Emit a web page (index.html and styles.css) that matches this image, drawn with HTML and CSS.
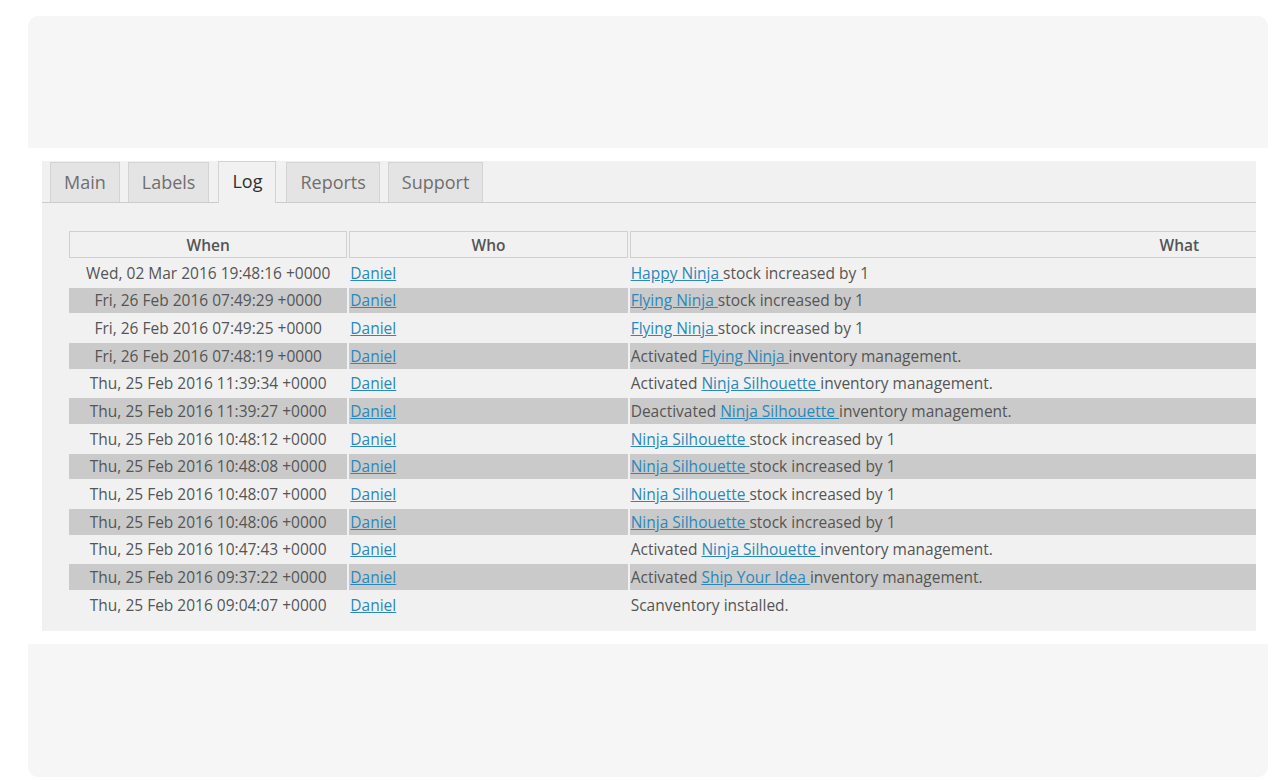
FILE: index.html
```html
<!DOCTYPE html>
<html>
<head>
<meta charset="utf-8">
<link rel="stylesheet" href="styles.css">
</head>
<body>
<div class="block block-top"></div>
<div class="panel">
  <div class="tabs">
    <div class="tab">Main</div>
    <div class="tab">Labels</div>
    <div class="tab active">Log</div>
    <div class="tab">Reports</div>
    <div class="tab">Support</div>
  </div>
  <table class="log">
    <colgroup><col class="c-when"><col class="c-who"><col class="c-what"></colgroup>
    <thead>
      <tr><th>When</th><th>Who</th><th>What</th></tr>
    </thead>
    <tbody>
      <tr><td class="when">Wed, 02 Mar 2016 19:48:16 +0000</td><td><a href="#">Daniel</a></td><td><a href="#">Happy Ninja </a>stock increased by 1</td></tr>
      <tr class="alt"><td class="when">Fri, 26 Feb 2016 07:49:29 +0000</td><td><a href="#">Daniel</a></td><td><a href="#">Flying Ninja </a>stock increased by 1</td></tr>
      <tr><td class="when">Fri, 26 Feb 2016 07:49:25 +0000</td><td><a href="#">Daniel</a></td><td><a href="#">Flying Ninja </a>stock increased by 1</td></tr>
      <tr class="alt"><td class="when">Fri, 26 Feb 2016 07:48:19 +0000</td><td><a href="#">Daniel</a></td><td>Activated <a href="#">Flying Ninja </a>inventory management.</td></tr>
      <tr><td class="when">Thu, 25 Feb 2016 11:39:34 +0000</td><td><a href="#">Daniel</a></td><td>Activated <a href="#">Ninja Silhouette </a>inventory management.</td></tr>
      <tr class="alt"><td class="when">Thu, 25 Feb 2016 11:39:27 +0000</td><td><a href="#">Daniel</a></td><td>Deactivated <a href="#">Ninja Silhouette </a>inventory management.</td></tr>
      <tr><td class="when">Thu, 25 Feb 2016 10:48:12 +0000</td><td><a href="#">Daniel</a></td><td><a href="#">Ninja Silhouette </a>stock increased by 1</td></tr>
      <tr class="alt"><td class="when">Thu, 25 Feb 2016 10:48:08 +0000</td><td><a href="#">Daniel</a></td><td><a href="#">Ninja Silhouette </a>stock increased by 1</td></tr>
      <tr><td class="when">Thu, 25 Feb 2016 10:48:07 +0000</td><td><a href="#">Daniel</a></td><td><a href="#">Ninja Silhouette </a>stock increased by 1</td></tr>
      <tr class="alt"><td class="when">Thu, 25 Feb 2016 10:48:06 +0000</td><td><a href="#">Daniel</a></td><td><a href="#">Ninja Silhouette </a>stock increased by 1</td></tr>
      <tr><td class="when">Thu, 25 Feb 2016 10:47:43 +0000</td><td><a href="#">Daniel</a></td><td>Activated <a href="#">Ninja Silhouette </a>inventory management.</td></tr>
      <tr class="alt"><td class="when">Thu, 25 Feb 2016 09:37:22 +0000</td><td><a href="#">Daniel</a></td><td>Activated <a href="#">Ship Your Idea </a>inventory management.</td></tr>
      <tr><td class="when">Thu, 25 Feb 2016 09:04:07 +0000</td><td><a href="#">Daniel</a></td><td>Scanventory installed.</td></tr>
    </tbody>
  </table>
</div>
<div class="block block-bottom"></div>
</body>
</html>
```

FILE: styles.css
```css
html, body {
  margin: 0;
  padding: 0;
  background: #ffffff;
  font-family: "Open Sans", "DejaVu Sans", sans-serif;
}

.block {
  background: #f6f6f6;
  width: 1240px;
  margin-left: 28px;
}

.block-top {
  margin-top: 16px;
  height: 132px;
  border-radius: 10px 10px 0 0;
}

.block-bottom {
  margin-top: 13px;
  height: 133px;
  border-radius: 0 0 10px 10px;
}

.panel {
  margin-top: 13px;
  margin-left: 42px;
  width: 1214px;
  height: 470px;
  background: #f1f1f1;
  overflow: hidden;
}

.tabs {
  display: flex;
  align-items: flex-end;
  gap: 8px;
  padding-left: 8px;
  border-bottom: 1px solid #cccccc;
  height: 41px;
}

.tab {
  height: 40px;
  box-sizing: border-box;
  padding: 0 13px;
  border: 1px solid #d3d3d3;
  border-bottom: none;
  background: #e4e4e4;
  color: #6f6f6f;
  font-size: 18px;
  line-height: 38px;
}

.tab.active {
  background: #f1f1f1;
  color: #2f2f2f;
  height: 42px;
  line-height: 39px;
  margin-bottom: -1px;
  margin-left: 1px;
  margin-right: 2px;
}

.log {
  margin-top: 26px;
  margin-left: 25px;
  border-collapse: separate;
  border-spacing: 2px;
  table-layout: fixed;
  width: 1664px;
  font-size: 15.5px;
  color: #555555;
}

.c-when { width: 278px; }
.c-who { width: 278px; }
.c-what { width: 1098px; }

.log th {
  height: 27px;
  box-sizing: border-box;
  padding: 0;
  border: 1px solid #d0d0d0;
  background: #f1f1f1;
  color: #555555;
  font-weight: 600;
  text-align: center;
  line-height: 24px;
}

.log td {
  height: 25.67px;
  padding: 0 1px;
  line-height: 20px;
  text-align: left;
  white-space: nowrap;
}

.log td.when {
  text-align: center;
}

.log tr.alt td {
  background: #cacaca;
}

.log a {
  color: #2a88bb;
  text-decoration: underline;
}
```
